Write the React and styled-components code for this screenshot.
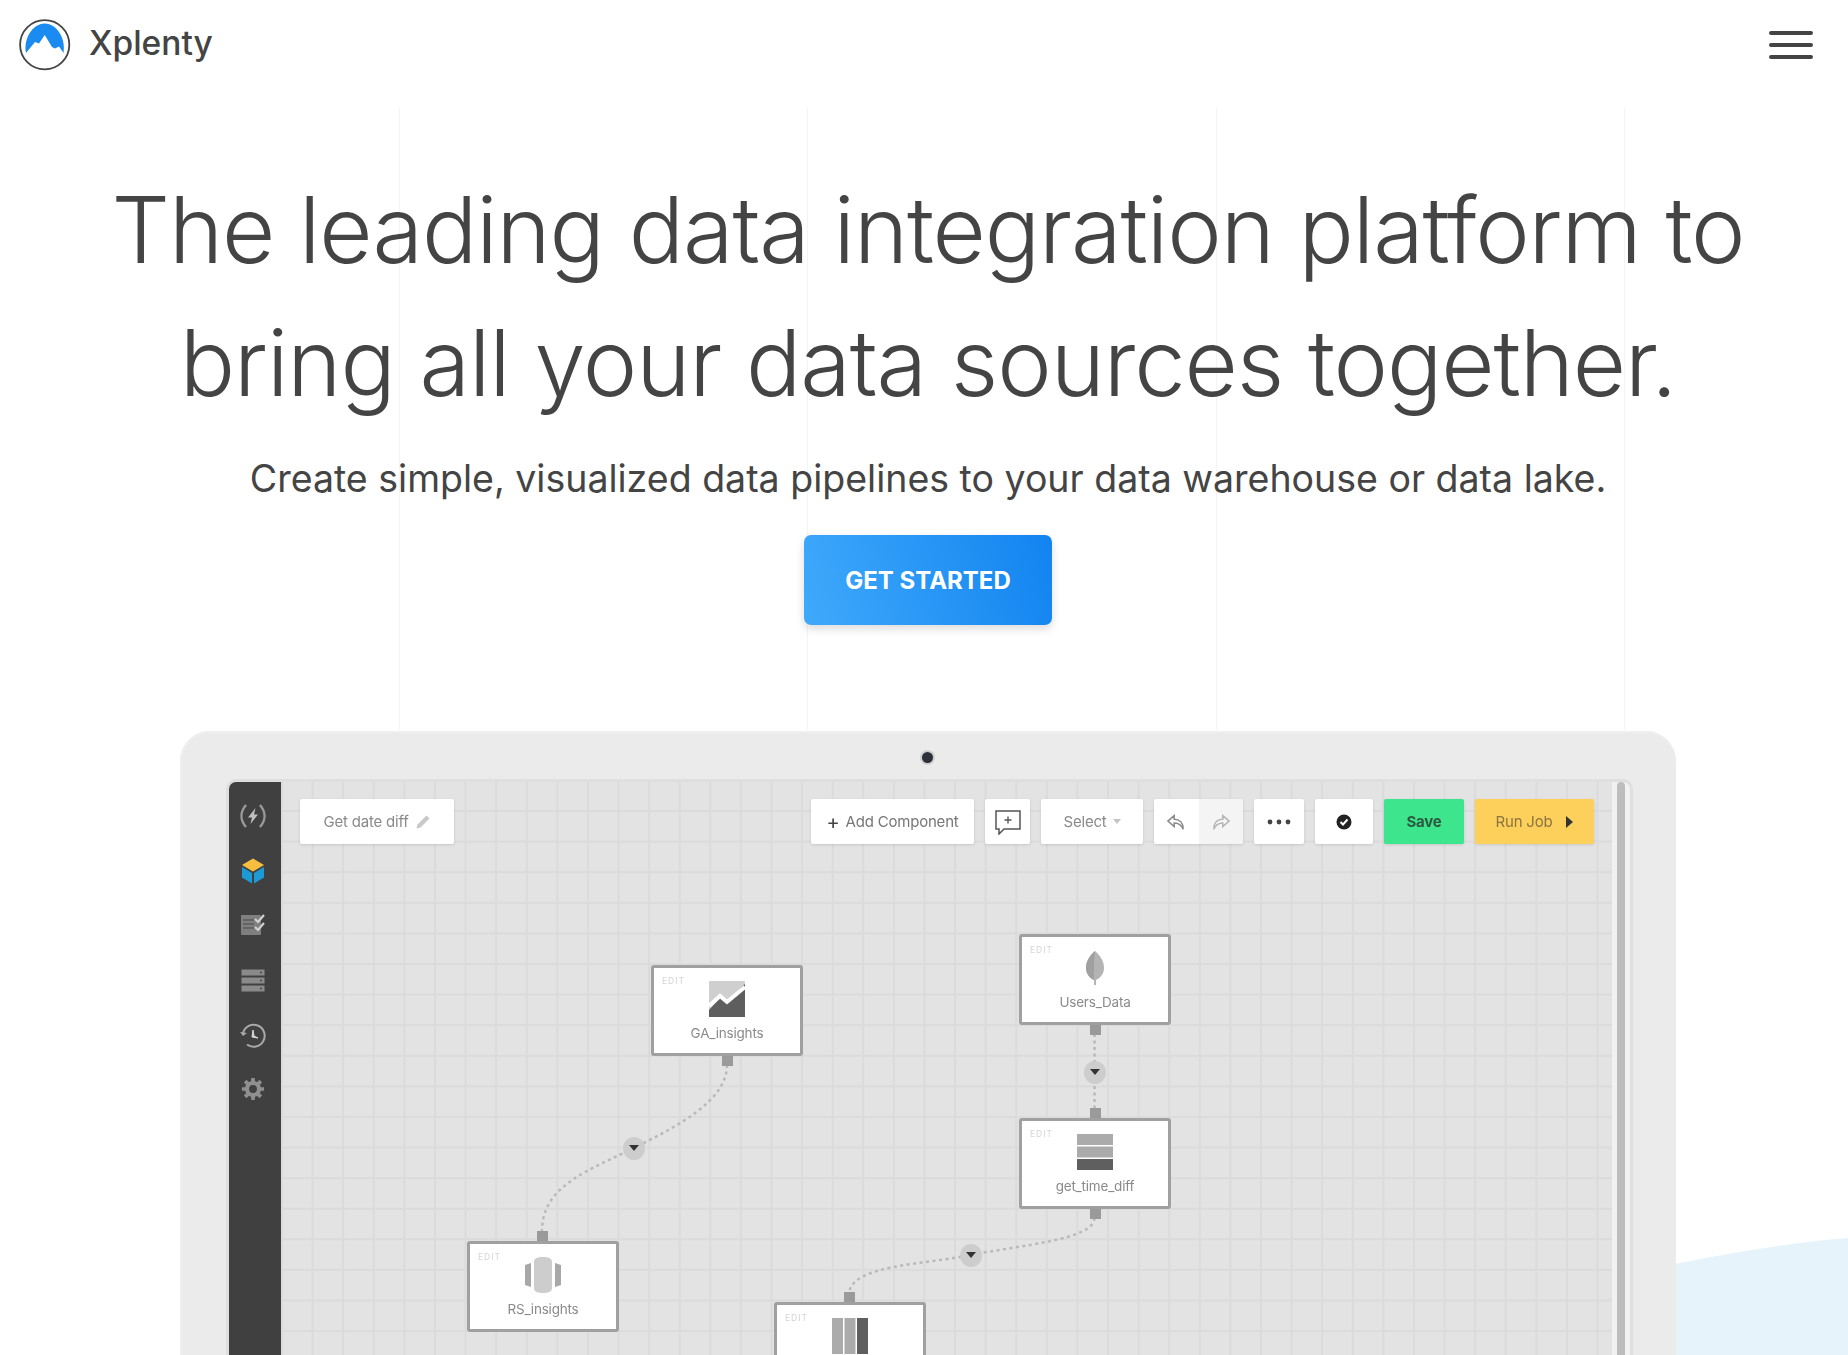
import React from 'react';
import styled, { createGlobalStyle } from 'styled-components';

const GlobalStyle = createGlobalStyle`
  html, body {
    margin: 0;
    background: #fff;
    font-family: 'Inter', 'Liberation Sans', sans-serif;
  }
`;

const Page = styled.div`
  position: relative;
  width: 1848px;
  height: 1355px;
  overflow: hidden;
  background: #fff;
  color: #444;
`;

const Header = styled.header`
  height: 108px;
  padding: 19px 35px 0 19px;
  box-sizing: border-box;
  display: flex;
  justify-content: space-between;
  align-items: flex-start;
`;

const Brand = styled.div`
  display: flex;
  align-items: center;
  gap: 18px;
  height: 52px;
  color: #444;
`;

const BrandName = styled.span`
  margin-bottom: 5px;
  font-size: 33.5px;
  font-weight: 500;
  line-height: 46px;
`;

const Burger = styled.div`
  width: 44px;
  margin-top: 12px;
  display: flex;
  flex-direction: column;
  gap: 8px;

  span {
    height: 4px;
    background: #444;
    border-radius: 2px;
  }
`;

const Guides = styled.div`
  position: absolute;
  left: 399px;
  top: 108px;
  width: 1226px;
  height: 622px;
  display: flex;
  justify-content: space-between;

  i {
    width: 1px;
    background: #f4f4f4;
  }
`;

const Hero = styled.section`
  position: relative;
  width: 1856px;
  display: flex;
  flex-direction: column;
  align-items: center;
  text-align: center;
`;

const Title = styled.h1`
  margin: 55px 0 0;
  font-size: 92px;
  font-weight: 300;
  line-height: 133px;
  letter-spacing: -1.1px;
  white-space: nowrap;
  color: #444;
`;

const Sub = styled.p`
  margin: 25px 0 0;
  font-size: 37.5px;
  line-height: 50px;
  white-space: nowrap;
  color: #444;
`;

const CallButton = styled.a`
  margin-top: 31px;
  width: 248px;
  height: 90px;
  display: flex;
  align-items: center;
  justify-content: center;
  border-radius: 7px;
  background: linear-gradient(75deg, #3fa9fb, #1284f0);
  box-shadow: 0 4px 10px rgba(0, 0, 0, 0.14);
  color: #fff;
  font-size: 24px;
  font-weight: 700;
`;

const Wave = styled.svg`
  position: absolute;
  right: 0;
  bottom: 0;
`;

const Laptop = styled.div`
  position: relative;
  margin: 106px 0 0 180px;
  width: 1496px;
  height: 640px;
  box-sizing: border-box;
  padding: 51px 46px 0 49px;
  border-radius: 30px 30px 0 0;
  background: #ebebeb;
  box-shadow: inset 0 2px 0 #efefef, inset 2px 0 0 #efefef;
`;

const Camera = styled.span`
  position: absolute;
  left: 742px;
  top: 21px;
  width: 11px;
  height: 11px;
  border-radius: 50%;
  background: #2c3038;
  box-shadow: 0 0 0 2px #cfcfcf;
  filter: blur(0.5px);
`;

const Screen = styled.div`
  height: 100%;
  display: flex;
  border-radius: 7px 7px 0 0;
  background: #e3e3e3;
  box-shadow: 0 0 0 3px #dfdfdf;
  filter: blur(0.7px);
  overflow: hidden;
`;

const Sidebar = styled.nav`
  width: 52px;
  flex: none;
  background: #404040;
  padding-top: 7px;
  display: flex;
  flex-direction: column;
  align-items: center;
`;

const SideSlot = styled.div`
  height: 54.6px;
  width: 100%;
  padding-right: 4px;
  box-sizing: border-box;
  display: flex;
  align-items: center;
  justify-content: center;
`;

const Canvas = styled.div`
  position: relative;
  flex: 1;
  background-color: #e3e3e3;
  background-image:
    linear-gradient(#dbdbdb 1.5px, transparent 1.5px),
    linear-gradient(90deg, #dbdbdb 1.5px, transparent 1.5px);
  background-size: 30.6px 30.6px;
  background-position: 0 28px;
`;

const Scrollbar = styled.div`
  width: 18px;
  flex: none;
  box-sizing: border-box;
  padding: 0 5px;
  background: #f1f1f1;

  &::after {
    content: '';
    display: block;
    width: 8px;
    height: 100%;
    background: #bdbdbd;
    border-radius: 4px 4px 0 0;
  }
`;

const Toolbar = styled.div`
  position: absolute;
  top: 17px;
  left: 19px;
  right: 18px;
  display: flex;
  align-items: flex-start;
  gap: 11px;
`;

const Tool = styled.div`
  height: 45px;
  width: ${p => p.$w}px;
  flex: none;
  display: flex;
  align-items: center;
  justify-content: center;
  gap: 6px;
  border-radius: 2px;
  background: ${p => p.$bg || '#fff'};
  color: ${p => p.$color || '#8a8a8a'};
  box-shadow: 0 1px 3px rgba(0, 0, 0, 0.12);
  font-size: 15px;
  letter-spacing: -0.2px;
`;

const Plus = styled.span`
  color: #444;
  font-size: 20px;
  line-height: 20px;
`;

const Caret = styled.span`
  border-style: solid;
  border-width: 5px 4px 0;
  border-color: #c4c4c4 transparent transparent;
`;

const RunArrow = styled.span`
  margin-left: 8px;
  border-style: solid;
  border-width: 6px 0 6px 7px;
  border-color: transparent transparent transparent #333;
`;

const Spacer = styled.div`
  flex: 1;
`;

const Split = styled.div`
  display: flex;
  width: 89px;
  height: 45px;
  flex: none;
  box-shadow: 0 1px 3px rgba(0, 0, 0, 0.12);
  border-radius: 2px;
  overflow: hidden;
`;

const SplitHalf = styled.div`
  flex: 1;
  display: flex;
  align-items: center;
  justify-content: center;
  background: ${p => (p.$dim ? '#f4f4f4' : '#fff')};
`;

const Node = styled.div`
  position: absolute;
  left: ${p => p.$x - 281}px;
  top: ${p => p.$y - 782}px;
  width: 152px;
  height: 91px;
  box-sizing: border-box;
  border: 3px solid #a0a0a0;
  border-radius: 3px;
  background: #fff;
  display: flex;
  flex-direction: column;
  align-items: center;
  padding-top: 13px;
`;

const EditTag = styled.span`
  position: absolute;
  left: 8px;
  top: 8px;
  font-size: 8.5px;
  letter-spacing: 1px;
  color: #d4d4d4;
`;

const NodeIcon = styled.div`
  height: 36px;
  display: flex;
  align-items: center;
  justify-content: center;
`;

const NodeLabel = styled.div`
  margin-top: 8px;
  font-size: 13.5px;
  letter-spacing: -0.2px;
  color: #8a8a8a;
`;

const Port = styled.span`
  position: absolute;
  left: ${p => p.$x - 281}px;
  top: ${p => p.$y - 782}px;
  width: 11px;
  height: 10px;
  background: #9a9a9a;
`;

const Marker = styled.span`
  position: absolute;
  left: ${p => p.$x - 281 - 11}px;
  top: ${p => p.$y - 782 - 11.5}px;
  width: 22px;
  height: 23px;
  border-radius: 50%;
  background: #cdcdcd;
  display: flex;
  align-items: center;
  justify-content: center;

  &::after {
    content: '';
    border-style: solid;
    border-width: 6px 5px 0;
    border-color: #333 transparent transparent;
  }
`;

const Edges = styled.svg`
  position: absolute;
  left: 0;
  top: 0;
  pointer-events: none;
`;

const Logo = () => (
  <svg width="52" height="52" viewBox="0 0 52 52">
    <circle cx="25.7" cy="25.7" r="24.6" fill="#fff" stroke="#444" strokeWidth="1.8" />
    <path
      d="M7 34 C4.5 20 13 5 25.7 4.5 C38.5 5 47 20 44.5 34 L40 27.5 L36 29.5 L33 28 L25.7 16 L20 24.5 L16 23 L7 34 Z"
      fill="#1a8cf1"
    />
  </svg>
);

const BoltIcon = () => (
  <svg width="28" height="28" viewBox="0 0 28 28" fill="none" stroke="#9a9a9a" strokeWidth="2.4">
    <path d="M7 3 C1 10 1 18 7 25" />
    <path d="M21 3 C27 10 27 18 21 25" />
    <path d="M16.5 6 L9 15.5 H13 L11.5 22 L19 12.5 H15 Z" fill="#c0c0c0" stroke="none" />
  </svg>
);

const BoxIcon = () => (
  <svg width="24" height="26" viewBox="0 0 24 26">
    <path d="M12 0.5 L23 7 L12 13.5 L1 7 Z" fill="#f6be3f" />
    <path d="M1 9 L11 15 V25.5 L1 19.5 Z" fill="#1c9ad6" />
    <path d="M23 9 L13 15 V25.5 L23 19.5 Z" fill="#1c9ad6" />
  </svg>
);

const TasksIcon = () => (
  <svg width="26" height="24" viewBox="0 0 26 24">
    <rect x="1" y="2" width="20" height="20" rx="1" fill="#7f7f7f" />
    <path d="M3 7 H14 M3 11 H14 M3 15 H14" stroke="#5c5c5c" strokeWidth="1.5" />
    <path d="M15 6 L18 9 L24 2 M15 14 L18 17 L24 10" stroke="#d2d2d2" strokeWidth="2.2" fill="none" />
  </svg>
);

const ServersIcon = () => (
  <svg width="24" height="23" viewBox="0 0 24 23">
    <rect x="0.5" y="0.5" width="23" height="6" fill="#8a8a8a" />
    <rect x="0.5" y="8.5" width="23" height="6" fill="#8a8a8a" />
    <rect x="0.5" y="16.5" width="23" height="6" fill="#8a8a8a" />
    <circle cx="20" cy="3.5" r="1" fill="#444" />
    <circle cx="20" cy="11.5" r="1" fill="#444" />
    <circle cx="20" cy="19.5" r="1" fill="#444" />
  </svg>
);

const HistoryIcon = () => (
  <svg width="28" height="28" viewBox="0 0 28 28" fill="none" stroke="#a8a8a8" strokeWidth="2">
    <path d="M4 12 A11 11 0 1 1 8 23.5" />
    <path d="M1 11 L4 15 L8 12" fill="#a8a8a8" stroke="none" />
    <path d="M14 9 L15 15 L19 17 L13 16 Z" fill="#d8d8d8" stroke="#d8d8d8" strokeWidth="1" />
  </svg>
);

const GearIcon = () => (
  <svg width="24" height="24" viewBox="0 0 26 26">
    <circle cx="13" cy="13" r="6.5" fill="none" stroke="#8f8f8f" strokeWidth="4.5" />
    <path
      d="M13 1 V6 M13 20 V25 M1 13 H6 M20 13 H25 M4.5 4.5 L8 8 M18 18 L21.5 21.5 M21.5 4.5 L18 8 M8 18 L4.5 21.5"
      stroke="#8f8f8f"
      strokeWidth="4"
    />
  </svg>
);

const Pencil = () => (
  <svg width="16" height="16" viewBox="0 0 16 16">
    <path d="M1.5 14.5 L2.5 10.5 L11.5 1.5 L14.5 4.5 L5.5 13.5 Z" fill="#c8c8c8" />
  </svg>
);

const CommentIcon = () => (
  <svg width="26" height="26" viewBox="0 0 26 26" fill="none" stroke="#555" strokeWidth="1.5">
    <path d="M1 2 H25 V20 H9 L4 25 V20 H1 Z" />
    <path d="M13 7.5 V14.5 M9.5 11 H16.5" strokeWidth="1.4" />
  </svg>
);

const ReplyIcon = ({ flip }) => (
  <svg width="20" height="18" viewBox="0 0 22 20" style={flip ? { transform: 'scaleX(-1)' } : undefined} fill="none" stroke={flip ? '#b5b5b5' : '#8a8a8a'} strokeWidth="1.7">
    <path d="M9 3 L2 9 L9 15 V11 C14 11 17 13 19 18 C19 11 15 7 9 7 Z" />
  </svg>
);

const CheckBadge = () => (
  <svg width="16" height="16" viewBox="0 0 16 16">
    <circle cx="8" cy="8" r="7.5" fill="#222" />
    <path d="M4.5 8 L7 10.5 L11.5 5.5" stroke="#fff" strokeWidth="2" fill="none" />
  </svg>
);

const Dots = () => (
  <svg width="24" height="6" viewBox="0 0 24 6">
    <circle cx="3" cy="3" r="2.4" fill="#444" />
    <circle cx="12" cy="3" r="2.4" fill="#444" />
    <circle cx="21" cy="3" r="2.4" fill="#444" />
  </svg>
);

const ChartIcon = () => (
  <svg width="36" height="36" viewBox="0 0 36 36">
    <rect x="0" y="0" width="36" height="36" rx="1" fill="#cfcfcf" />
    <path d="M0 29 L11 17 L17 22 L36 3 V36 H0 Z" fill="#5e5e5e" />
    <path d="M0 25 L11 15 L18 21 L36 6" stroke="#fff" strokeWidth="4" fill="none" />
  </svg>
);

const LeafIcon = () => (
  <svg width="20" height="36" viewBox="0 0 20 36">
    <path d="M10 1 C3 7 1 13 1 18 C1 24 5 28 9 30 V35 H11 V30 C15 28 19 24 19 18 C19 13 17 7 10 1 Z" fill="#b4b4b4" />
    <path d="M10 1 C3 7 1 13 1 18 C1 24 5 28 9 30 V12 Z" fill="#a0a0a0" />
  </svg>
);

const RowsIcon = () => (
  <svg width="36" height="36" viewBox="0 0 36 36">
    <rect width="36" height="11" fill="#ababab" />
    <rect y="12.5" width="36" height="11" fill="#ababab" />
    <rect y="25" width="36" height="11" fill="#5f5f5f" />
  </svg>
);

const ColumnsIcon = () => (
  <svg width="36" height="36" viewBox="0 0 36 36">
    <rect width="11" height="36" fill="#ababab" />
    <rect x="12.5" width="11" height="36" fill="#ababab" />
    <rect x="25" width="11" height="36" fill="#5f5f5f" />
  </svg>
);

const RedshiftIcon = () => (
  <svg width="36" height="36" viewBox="0 0 36 36">
    <path d="M9 5 C9 1 13 0 18 0 C23 0 27 1 27 5 V31 C27 35 23 36 18 36 C13 36 9 35 9 31 Z" fill="#cdcdcd" />
    <path d="M0 8 L6 6 V30 L0 28 Z M36 8 L30 6 V30 L36 28 Z" fill="#a8a8a8" />
  </svg>
);

const nodes = [
  { x: 651, y: 965, label: 'GA_insights', icon: <ChartIcon /> },
  { x: 1019, y: 934, label: 'Users_Data', icon: <LeafIcon /> },
  { x: 1019, y: 1118, label: 'get_time_diff', icon: <RowsIcon /> },
  { x: 467, y: 1241, label: 'RS_insights', icon: <RedshiftIcon /> },
  { x: 774, y: 1302, icon: <ColumnsIcon /> },
];

const ports = [
  [722, 1056], [1090, 1025], [1090, 1108], [1090, 1209], [844, 1292], [537, 1231],
];

const markers = [
  [634, 1148], [1094.5, 1072], [971, 1255],
];

const sideIcons = [BoltIcon, BoxIcon, TasksIcon, ServersIcon, HistoryIcon, GearIcon];

const App = () => (
  <Page>
    <GlobalStyle />
    <Wave width="400" height="120" viewBox="0 0 400 120">
      <path d="M0 75 C100 60 260 14 400 3 V120 H0 Z" fill="#e7f3fb" />
    </Wave>
    <Guides>
      <i /><i /><i /><i />
    </Guides>
    <Header>
      <Brand>
        <Logo />
        <BrandName>Xplenty</BrandName>
      </Brand>
      <Burger>
        <span /><span /><span />
      </Burger>
    </Header>
    <Hero>
      <Title>
        The leading data integration platform to
        <br />
        bring all your data sources together.
      </Title>
      <Sub>Create simple, visualized data pipelines to your data warehouse or data lake.</Sub>
      <CallButton>GET STARTED</CallButton>
    </Hero>
    <Laptop>
      <Camera />
      <Screen>
        <Sidebar>
          {sideIcons.map((Icon, i) => <SideSlot key={i}><Icon /></SideSlot>)}
        </Sidebar>
        <Canvas>
          <Edges width="1340" height="580" viewBox="281 782 1340 580" fill="none" stroke="#b9b9b9" strokeWidth="2.5" strokeDasharray="3 3.5">
            <path d="M727 1065 C727 1100 680 1125 634 1148 C590 1170 542 1185 542 1231" />
            <path d="M1094.5 1034 V1109" />
            <path d="M1094.5 1218 C1094 1240 1020 1245 971 1255 C920 1265 855 1265 849 1292" />
          </Edges>
          <Toolbar>
            <Tool $w={154}>Get date diff <Pencil /></Tool>
            <Spacer />
            <Tool $w={163} $color="#777"><Plus>+</Plus> Add Component</Tool>
            <Tool $w={45}><CommentIcon /></Tool>
            <Tool $w={102}>Select <Caret /></Tool>
            <Split>
              <SplitHalf><ReplyIcon /></SplitHalf>
              <SplitHalf $dim><ReplyIcon flip /></SplitHalf>
            </Split>
            <Tool $w={50}><Dots /></Tool>
            <Tool $w={58}><CheckBadge /></Tool>
            <Tool $w={80} $bg="#3de58c" $color="#2c5a40"><strong>Save</strong></Tool>
            <Tool $w={119} $bg="#fdd05c" $color="#8a7440">Run Job <RunArrow /></Tool>
          </Toolbar>
          {nodes.map(n => (
            <Node key={n.x + '-' + n.y} $x={n.x} $y={n.y}>
              <EditTag>EDIT</EditTag>
              <NodeIcon>{n.icon}</NodeIcon>
              {n.label && <NodeLabel>{n.label}</NodeLabel>}
            </Node>
          ))}
          {ports.map(([x, y]) => <Port key={`${x}-${y}`} $x={x} $y={y} />)}
          {markers.map(([x, y]) => <Marker key={x} $x={x} $y={y} />)}
        </Canvas>
        <Scrollbar />
      </Screen>
    </Laptop>
  </Page>
);

export default App;
